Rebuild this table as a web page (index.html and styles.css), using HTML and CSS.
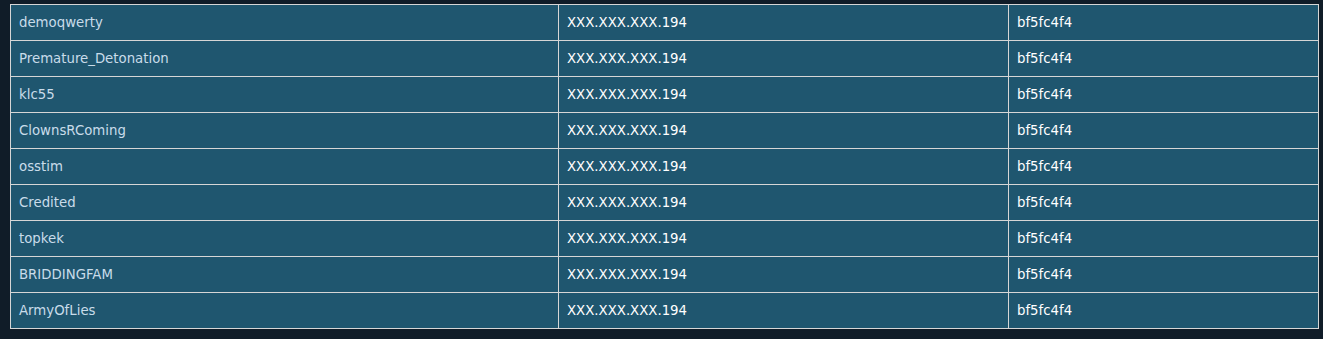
FILE: index.html
```html
<!DOCTYPE html>
<html lang="en">
<head>
  <meta charset="UTF-8">
  <title>Player Sessions</title>
  <link rel="stylesheet" href="styles.css">
</head>
<body>
  <table class="session-table">
    <tbody>
      <tr><td class="player">demoqwerty</td><td>XXX.XXX.XXX.194</td><td>bf5fc4f4</td></tr>
      <tr><td class="player">Premature_Detonation</td><td>XXX.XXX.XXX.194</td><td>bf5fc4f4</td></tr>
      <tr><td class="player">klc55</td><td>XXX.XXX.XXX.194</td><td>bf5fc4f4</td></tr>
      <tr><td class="player">ClownsRComing</td><td>XXX.XXX.XXX.194</td><td>bf5fc4f4</td></tr>
      <tr><td class="player">osstim</td><td>XXX.XXX.XXX.194</td><td>bf5fc4f4</td></tr>
      <tr><td class="player">Credited</td><td>XXX.XXX.XXX.194</td><td>bf5fc4f4</td></tr>
      <tr><td class="player">topkek</td><td>XXX.XXX.XXX.194</td><td>bf5fc4f4</td></tr>
      <tr><td class="player">BRIDDINGFAM</td><td>XXX.XXX.XXX.194</td><td>bf5fc4f4</td></tr>
      <tr><td class="player">ArmyOfLies</td><td>XXX.XXX.XXX.194</td><td>bf5fc4f4</td></tr>
    </tbody>
  </table>
</body>
</html>
```

FILE: styles.css
```css
body {
  margin: 0;
  padding: 4px 0 0 10px;
  background-color: #101c28;
  font-family: "DejaVu Sans", Verdana, sans-serif;
  font-size: 13.3px;
}

/* Session list */
.session-table {
  width: 1309px;
  border-collapse: collapse;
  table-layout: fixed;
}

.session-table td {
  height: 35px;
  padding: 0 8px;
  background-color: #1f566f;
  border: 1px solid #d6d6d6;
  color: #ffffff;
  vertical-align: middle;
  white-space: nowrap;
}

.session-table td:nth-child(1) {
  width: 531px;
}

.session-table td:nth-child(2) {
  width: 433px;
}

.session-table .player {
  color: #c9dcea;
}
```
